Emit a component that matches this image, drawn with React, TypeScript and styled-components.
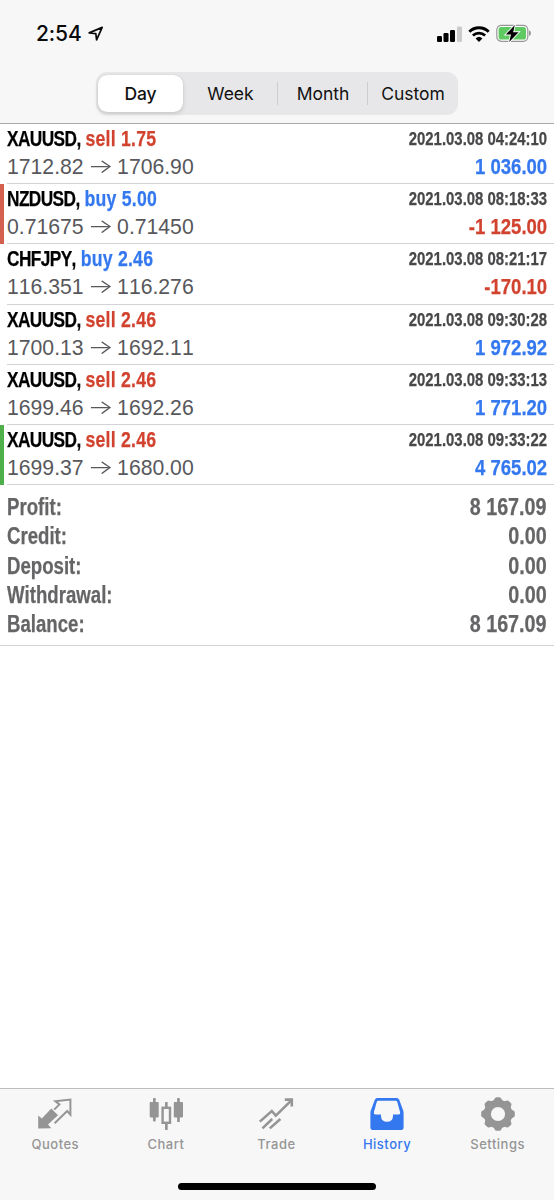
import React from "react";
import styled, { createGlobalStyle } from "styled-components";

const BLUE = "#3478f0";
const RED = "#d1432f";
const GREY = "#959595";

const GlobalStyle = createGlobalStyle`
  *, *::before, *::after { box-sizing: border-box; }
  body { margin: 0; background: #fff; font-family: Inter, "Liberation Sans", sans-serif; }
`;

const Screen = styled.div`
  width: 554px;
  height: 1200px;
  display: flex;
  flex-direction: column;
  background: #fff;
  overflow: hidden;
`;

const Header = styled.header`
  height: 124px;
  flex: none;
  background: #f7f7f7;
  border-bottom: 1px solid #a9a9ab;
`;

const StatusBar = styled.div`
  height: 72px;
  padding: 20px 22px 0 36px;
  display: flex;
  justify-content: space-between;
`;

const Clock = styled.div`
  display: flex;
  align-items: center;
  gap: 6px;
  height: 27px;
  font-size: 21px;
  font-weight: 550;
  letter-spacing: -0.1px;
  color: #0a0a0a;
`;

const StatusIcons = styled.div`
  display: flex;
  align-items: center;
  height: 27px;
`;

const Segments = styled.div`
  width: 362px;
  height: 43px;
  margin: 0 auto 0 96px;
  padding: 3px 0 3px 2px;
  display: grid;
  grid-template-columns: 85px 95px 90px 90px;
  border-radius: 11px;
  background: #e7e7e9;
`;

const Segment = styled.div<{ $active?: boolean; $divided?: boolean }>`
  position: relative;
  display: flex;
  align-items: center;
  justify-content: center;
  border-radius: 9px;
  font-size: 17.5px;
  line-height: 24px;
  font-weight: ${(p) => (p.$active ? 550 : 400)};
  letter-spacing: ${(p) => (p.$active ? "-0.15px" : "0")};
  color: #111;
  background: ${(p) => (p.$active ? "#fff" : "transparent")};
  box-shadow: ${(p) => (p.$active ? "0 2px 5px rgba(0,0,0,.13), 0 0 1px rgba(0,0,0,.15)" : "none")};
  &::before {
    content: "";
    display: ${(p) => (p.$divided ? "block" : "none")};
    position: absolute;
    left: -1px;
    top: 7px;
    bottom: 7px;
    width: 1px;
    background: #cdcdd1;
  }
`;

const Deals = styled.main`
  flex: none;
`;

const Deal = styled.article<{ $mark?: string }>`
  height: 60.2px;
  display: flex;
  border-left: 4px solid ${(p) => p.$mark || "transparent"};
  padding-left: 3px;
`;

const DealBody = styled.div`
  flex: 1;
  display: grid;
  grid-template-columns: 1fr auto;
  grid-template-rows: 30px 27px;
  padding-right: 7px;
  border-bottom: 1px solid #d3d3d5;
  white-space: nowrap;
`;

const Condensed = styled.div`
  font-family: "Liberation Sans", Arial, sans-serif;
  font-weight: 700;
  font-kerning: none;
  -webkit-text-stroke: 0.25px currentColor;
  transform-origin: left center;
`;

const Title = styled(Condensed)`
  font-size: 22px;
  line-height: 30px;
  letter-spacing: -0.75px;
  color: #000;
  transform: scaleX(0.785);
`;

const Side = styled.span<{ $side: string }>`
  margin-left: 0.8px;
  font-size: 22.5px;
  letter-spacing: 0.3px;
  color: ${(p) => (p.$side === "buy" ? BLUE : RED)};
`;

const Time = styled(Condensed)`
  font-size: 18px;
  line-height: 30px;
  color: #48484a;
  text-align: right;
  transform: scaleX(0.828);
  transform-origin: right center;
`;

const Prices = styled.div`
  display: flex;
  align-items: center;
  height: 25px;
  font-family: "Liberation Sans", sans-serif;
  font-size: 21.2px;
  line-height: 25px;
  font-kerning: none;
  color: #58585c;
`;

const Arrow = styled.span`
  width: 33.5px;
  text-align: center;
  font-family: Inter, sans-serif;
  font-weight: 300;
  font-size: 19px;
  transform: scaleX(1.45);
`;

const Result = styled(Condensed)<{ $loss: boolean }>`
  font-size: 21.5px;
  line-height: 27px;
  text-align: right;
  color: ${(p) => (p.$loss ? RED : BLUE)};
  transform: scaleX(0.862);
  transform-origin: right center;
`;

const Summary = styled.dl`
  margin: 0;
  height: 161px;
  flex: none;
  padding: 6.6px 7px 0;
  border-bottom: 1px solid #d3d3d5;
`;

const SummaryRow = styled.div`
  display: flex;
  justify-content: space-between;
  height: 29.4px;
  font-size: 23px;
  line-height: 30px;
  color: #656567;
`;

const SummaryLabel = styled(Condensed).attrs({ as: "dt" })`
  transform: scaleX(0.81);
`;

const SummaryValue = styled(Condensed).attrs({ as: "dd" })`
  margin: 0;
  transform: scaleX(0.858);
  transform-origin: right center;
`;

const TabBar = styled.nav`
  height: 112px;
  flex: none;
  margin-top: auto;
  background: #f7f7f7;
  border-top: 1px solid #bdbdbf;
  display: flex;
  flex-direction: column;
  align-items: center;
`;

const Tabs = styled.div`
  width: 554px;
  height: 93.5px;
  display: grid;
  grid-template-columns: repeat(5, 110.6px);
`;

const Tab = styled.div<{ $active?: boolean }>`
  padding-top: 6px;
  display: flex;
  flex-direction: column;
  align-items: center;
  color: ${(p) => (p.$active ? BLUE : GREY)};
`;

const TabLabel = styled.span`
  margin-top: 4px;
  font-size: 13px;
  line-height: 18px;
  font-weight: 450;
  letter-spacing: 0.5px;
`;

const HomeIndicator = styled.div`
  width: 198px;
  height: 7px;
  border-radius: 4px;
  background: #000;
`;

const LocationIcon = () => (
  <svg width="16" height="16" viewBox="0 0 16 16" fill="none" stroke="#0a0a0a" strokeWidth="1.7" strokeLinejoin="round">
    <path d="M1.2 6.9 L14.2 1.4 L8.6 13.8 L7.8 7.6 Z" />
  </svg>
);

const SignalIcon = () => (
  <svg width="26" height="18" viewBox="0 0 26 18">
    <rect x="0" y="11" width="5" height="6" rx="1.2" />
    <rect x="6.5" y="8" width="5" height="9" rx="1.2" />
    <rect x="13" y="5" width="5" height="12" rx="1.2" />
    <rect x="20" y="1.4" width="5" height="15.6" rx="1.2" fill="#cbcbcb" />
  </svg>
);

const WifiIcon = () => (
  <svg width="22" height="18" viewBox="0 0 22 18" style={{ marginLeft: 5 }}>
    <path d="M1.3 6.7 A14 14 0 0 1 20.7 6.7" fill="none" stroke="#000" strokeWidth="2.9" />
    <path d="M4.9 10.5 A8.8 8.8 0 0 1 17.1 10.5" fill="none" stroke="#000" strokeWidth="2.7" />
    <path d="M7.6 13.4 A5 5 0 0 1 14.4 13.4 L11 16.9 Z" />
  </svg>
);

const BatteryIcon = () => (
  <svg width="36" height="19" viewBox="0 0 36 19" style={{ marginLeft: 6 }}>
    <rect x="0.8" y="1.3" width="31" height="16" rx="4.5" fill="#fff" stroke="#969696" strokeWidth="1.2" />
    <rect x="2.6" y="3.1" width="27.4" height="12.4" rx="2.6" fill="#60ca62" />
    <path d="M33 6.6 C35.6 7 35.6 11.6 33 12 Z" fill="#969696" />
    <path d="M18.8 1 L9.8 10.6 H15 L13.2 18 L22.6 8.2 H17.2 Z" fill="#000" stroke="#fff" strokeWidth="1.8" paintOrder="stroke" />
  </svg>
);

const QuotesIcon = () => (
  <svg width="36" height="36" viewBox="0 0 36 36">
    <path d="M1.2 33.6 V20.4 L4.8 23.4 L14.3 13.6 L21 20.2 L11 29.6 L14.3 33.2 Z" fill="currentColor" />
    <path d="M17.6 28.2 L30.2 16 L33.4 19.6 V4.6 L18.4 6.2 L22.4 9.4 L17.2 14.6" fill="none" stroke="currentColor" strokeWidth="2" />
  </svg>
);

const ChartIcon = () => (
  <svg width="36" height="36" viewBox="0 0 36 36" fill="currentColor">
    <rect x="1.7" y="7" width="9" height="15.4" rx="0.8" />
    <rect x="5" y="3" width="2.7" height="23.4" rx="0.6" />
    <rect x="25.8" y="7" width="9.2" height="15.4" rx="0.8" />
    <rect x="29.1" y="3" width="2.7" height="24" rx="0.6" />
    <rect x="17" y="7" width="2.7" height="5" rx="0.6" />
    <rect x="17" y="28.6" width="2.7" height="6.4" rx="0.6" />
    <rect x="14.6" y="12.8" width="7.4" height="15" fill="none" stroke="currentColor" strokeWidth="2.4" />
  </svg>
);

const TradeIcon = () => (
  <svg width="36" height="36" viewBox="0 0 36 36" fill="none" stroke="currentColor" strokeWidth="2.6">
    <path d="M1.8 26.6 L13.8 16 L17.8 20.6 L33.4 5.4" />
    <path d="M26.8 4.6 H33.8 V11.6" />
    <path d="M4.4 33.4 L14.2 24 M11.8 33.4 L22.4 24" />
  </svg>
);

const HistoryIcon = () => (
  <svg width="36" height="36" viewBox="0 0 36 36">
    <path
      fill="currentColor"
      fillRule="evenodd"
      d="M8.3 3 H27.7 Q29.5 3 30.2 4.7 L34.2 15.5 Q34.6 16.8 34.6 18 V32.2 Q34.6 35 31.8 35 H4.2 Q1.4 35 1.4 32.2 V18 Q1.4 16.8 1.8 15.5 L5.8 4.7 Q6.5 3 8.3 3 Z M9.3 5.8 Q8.2 5.8 7.8 6.8 L4.9 17.2 Q4.4 19.4 6.4 19.4 H12 V21 Q12.2 26.8 18 26.8 Q23.8 26.8 24 21 V19.4 H29.6 Q31.6 19.4 31.1 17.2 L28.2 6.8 Q27.8 5.8 26.7 5.8 Z"
    />
  </svg>
);

const SettingsIcon = () => (
  <svg width="36" height="36" viewBox="0 0 36 36" fill="currentColor">
    <defs>
      <mask id="hub">
        <rect width="36" height="36" fill="#fff" />
        <circle cx="18" cy="19" r="7.1" fill="#000" />
      </mask>
    </defs>
    <g mask="url(#hub)">
      <circle cx="18" cy="19" r="14.3" />
      {[0, 45, 90, 135, 180, 225, 270, 315].map((a) => (
        <path key={a} transform={`rotate(${a} 18 19)`} d="M12.2 6.4 Q14 5.6 14.6 3.8 Q15.2 2.2 16.6 2.2 H19.4 Q20.8 2.2 21.4 3.8 Q22 5.6 23.8 6.4 L20 12 H16 Z" />
      ))}
    </g>
  </svg>
);

const deals = [
  { symbol: "XAUUSD", side: "sell", volume: "1.75", open: "1712.82", close: "1706.90", time: "2021.03.08 04:24:10", result: "1 036.00" },
  { symbol: "NZDUSD", side: "buy", volume: "5.00", open: "0.71675", close: "0.71450", time: "2021.03.08 08:18:33", result: "-1 125.00", mark: "#d4604f" },
  { symbol: "CHFJPY", side: "buy", volume: "2.46", open: "116.351", close: "116.276", time: "2021.03.08 08:21:17", result: "-170.10" },
  { symbol: "XAUUSD", side: "sell", volume: "2.46", open: "1700.13", close: "1692.11", time: "2021.03.08 09:30:28", result: "1 972.92" },
  { symbol: "XAUUSD", side: "sell", volume: "2.46", open: "1699.46", close: "1692.26", time: "2021.03.08 09:33:13", result: "1 771.20" },
  { symbol: "XAUUSD", side: "sell", volume: "2.46", open: "1699.37", close: "1680.00", time: "2021.03.08 09:33:22", result: "4 765.02", mark: "#4fb04a" },
];

const summary = [
  ["Profit:", "8 167.09"],
  ["Credit:", "0.00"],
  ["Deposit:", "0.00"],
  ["Withdrawal:", "0.00"],
  ["Balance:", "8 167.09"],
];

const tabs = [
  { label: "Quotes", Icon: QuotesIcon },
  { label: "Chart", Icon: ChartIcon },
  { label: "Trade", Icon: TradeIcon },
  { label: "History", Icon: HistoryIcon, active: true },
  { label: "Settings", Icon: SettingsIcon },
];

export default function App() {
  return (
    <Screen>
      <GlobalStyle />
      <Header>
        <StatusBar>
          <Clock>
            2:54
            <LocationIcon />
          </Clock>
          <StatusIcons>
            <SignalIcon />
            <WifiIcon />
            <BatteryIcon />
          </StatusIcons>
        </StatusBar>
        <Segments>
          <Segment $active>Day</Segment>
          <Segment>Week</Segment>
          <Segment $divided>Month</Segment>
          <Segment $divided>Custom</Segment>
        </Segments>
      </Header>
      <Deals>
        {deals.map((d) => (
          <Deal key={d.time} $mark={d.mark}>
            <DealBody>
              <Title>
                {d.symbol}, <Side $side={d.side}>{d.side} {d.volume}</Side>
              </Title>
              <Time>{d.time}</Time>
              <Prices>
                {d.open}
                <Arrow>→</Arrow>
                {d.close}
              </Prices>
              <Result $loss={d.result.startsWith("-")}>{d.result}</Result>
            </DealBody>
          </Deal>
        ))}
      </Deals>
      <Summary>
        {summary.map(([label, value]) => (
          <SummaryRow key={label}>
            <SummaryLabel>{label}</SummaryLabel>
            <SummaryValue>{value}</SummaryValue>
          </SummaryRow>
        ))}
      </Summary>
      <TabBar>
        <Tabs>
          {tabs.map(({ label, Icon, active }) => (
            <Tab key={label} $active={active}>
              <Icon />
              <TabLabel>{label}</TabLabel>
            </Tab>
          ))}
        </Tabs>
        <HomeIndicator />
      </TabBar>
    </Screen>
  );
}
